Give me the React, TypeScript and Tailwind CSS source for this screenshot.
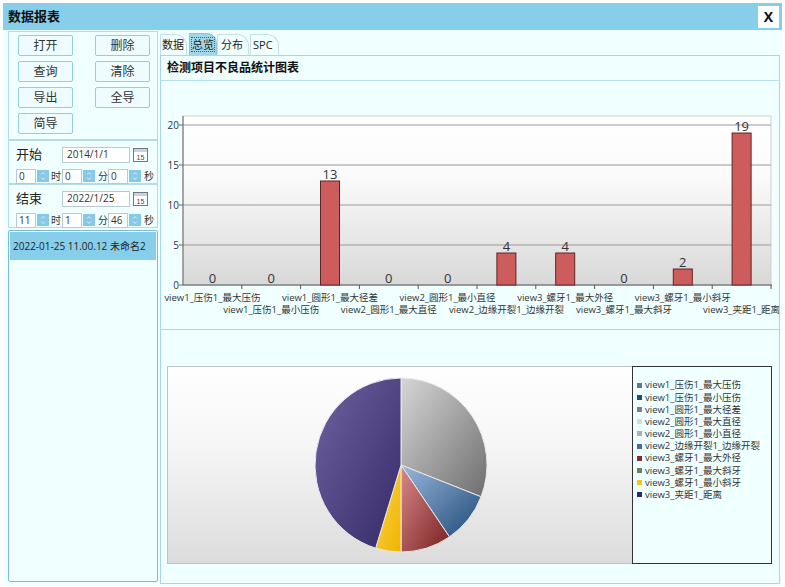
import React from "react"

type Cat = { name: string; value: number; color: string }

const cats: Cat[] = [
  { name: "view1_压伤1_最大压伤", value: 0, color: "#5f7888" },
  { name: "view1_压伤1_最小压伤", value: 0, color: "#1f4e79" },
  { name: "view1_圆形1_最大径差", value: 13, color: "#7f7f7f" },
  { name: "view2_圆形1_最大直径", value: 0, color: "#d8d8d8" },
  { name: "view2_圆形1_最小直径", value: 0, color: "#b0b0b0" },
  { name: "view2_边缘开裂1_边缘开裂", value: 4, color: "#4a6a9a" },
  { name: "view3_螺牙1_最大外径", value: 4, color: "#8b2a2a" },
  { name: "view3_螺牙1_最大斜牙", value: 0, color: "#6f7f5f" },
  { name: "view3_螺牙1_最小斜牙", value: 2, color: "#f5c518" },
  { name: "view3_夹距1_距离", value: 19, color: "#2c2870" },
]

// gradient stops per slice (light -> dark)
const sliceFill: Record<number, [string, string]> = {
  2: ["#d6d6d6", "#6e6e6e"],
  5: ["#9ab8dc", "#1f4a78"],
  6: ["#d88a8a", "#7a1f1f"],
  8: ["#fbd34a", "#f0b400"],
  9: ["#6f62a0", "#352a68"],
}

function Spinner() {
  return (
    <svg width="12" height="12" viewBox="0 0 12 12" className="shrink-0">
      <rect width="12" height="12" fill="#86c8e6" />
      <path d="M4 4.5 L6 2.5 L8 4.5" fill="none" stroke="#d9f1fb" strokeWidth="1" />
      <path d="M4 7.5 L6 9.5 L8 7.5" fill="none" stroke="#d9f1fb" strokeWidth="1" />
    </svg>
  )
}

function CalendarIcon() {
  return (
    <svg width="15" height="14" viewBox="0 0 15 14" className="shrink-0">
      <rect x="0.5" y="0.5" width="14" height="13" fill="#fff" stroke="#6d7a86" />
      <rect x="1" y="1" width="13" height="3" fill="#c9d3dc" />
      <text x="7.5" y="11.5" fontSize="7" textAnchor="middle" fill="#3a4a5a" fontFamily="Liberation Sans, sans-serif">
        15
      </text>
    </svg>
  )
}

function Btn({ label }: { label: string }) {
  return (
    <button className="flex h-[21px] w-[55px] items-center justify-center rounded-[2px] border border-[#93cde0] bg-[#effcff] text-[12px] text-[#333]">
      {label}
    </button>
  )
}

function TimeRow({ h, m, s }: { h: string; m: string; s: string }) {
  const box = "flex h-[15px] w-[20px] items-center border border-[#b9c9d3] bg-white pl-[2px] text-[10px]"
  return (
    <div className="flex items-center gap-[1px] text-[10px] text-[#333]">
      <div className={box}>{h}</div>
      <Spinner />
      <span className="ml-[1px] w-[10px]">时</span>
      <div className={box}>{m}</div>
      <Spinner />
      <span className="ml-[2px] w-[9px]">分</span>
      <div className={box}>{s}</div>
      <Spinner />
      <span className="ml-[2px]">秒</span>
    </div>
  )
}

function DateGroup({ label, date, h, m, s }: { label: string; date: string; h: string; m: string; s: string }) {
  return (
    <div className="flex h-[44px] flex-col gap-[4px] border border-[#b3dbe8] pl-[7px] pt-[4px]">
      <div className="flex items-center">
        <span className="w-[46px] text-[13px] text-[#222]">{label}</span>
        <div className="flex h-[16px] w-[68px] items-center border border-[#b9c9d3] bg-white pl-[4px] text-[10px] text-[#333]">
          {date}
        </div>
        <div className="ml-[3px]">
          <CalendarIcon />
        </div>
      </div>
      <TimeRow h={h} m={m} s={s} />
    </div>
  )
}

function BarChart() {
  const W = 58.8
  const x0 = 22
  const y0 = 204
  const u = 8
  return (
    <svg width={620} height={250} className="block" fontFamily="'Open Sans','Noto Sans CJK SC',sans-serif">
      <defs>
        <linearGradient id="plotbg" x1="0" y1="0" x2="0" y2="1">
          <stop offset="0" stopColor="#ffffff" />
          <stop offset="0.35" stopColor="#fbfbfb" />
          <stop offset="1" stopColor="#d8d8d8" />
        </linearGradient>
      </defs>
      <rect x={x0} y={35} width={588} height={169} fill="url(#plotbg)" stroke="#cfcfcf" />
      {[5, 10, 15, 20].map((v) => (
        <line key={v} x1={x0} x2={610} y1={y0 - v * u} y2={y0 - v * u} stroke="#9a9a9a" strokeWidth="1" />
      ))}
      <line x1={x0} x2={x0} y1={35} y2={y0} stroke="#666" />
      <line x1={x0} x2={611} y1={y0} y2={y0} stroke="#555" />
      {[0, 5, 10, 15, 20].map((v) => (
        <g key={v}>
          <line x1={x0 - 4} x2={x0} y1={y0 - v * u} y2={y0 - v * u} stroke="#666" />
          <text x={x0 - 4} y={y0 - v * u + 3.5} fontSize="10" textAnchor="end" fill="#333">
            {v}
          </text>
        </g>
      ))}
      {cats.map((c, i) => (
        <line key={i} x1={x0 + (i + 1) * W} x2={x0 + (i + 1) * W} y1={y0} y2={y0 + 4} stroke="#555" />
      ))}
      {cats.map((c, i) => {
        const cx = x0 + (i + 0.5) * W
        const top = y0 - c.value * u
        return (
          <g key={c.name}>
            {c.value > 0 && (
              <rect x={cx - 9.5} y={top} width={19} height={c.value * u} fill="#cd5c5c" stroke="#5e2424" strokeWidth="1" />
            )}
            <text x={cx} y={top - 2} fontSize="13" textAnchor="middle" fill="#333">
              {c.value}
            </text>
            <text x={cx} y={i % 2 === 0 ? 220 : 232} fontSize="9.5" textAnchor="middle" fill="#333">
              {c.name}
            </text>
          </g>
        )
      })}
    </svg>
  )
}

function PieChart() {
  const total = cats.reduce((a, c) => a + c.value, 0)
  const cx = 233
  const cy = 98
  const rx = 86
  const ry = 87
  let acc = 0
  const pt = (a: number) => [cx + rx * Math.sin(a), cy - ry * Math.cos(a)]
  return (
    <svg width={465} height={196} className="block">
      <defs>
        {Object.entries(sliceFill).map(([k, [a, b]]) => (
          <linearGradient key={k} id={"pie" + k} x1="0" y1="0" x2="1" y2="1">
            <stop offset="0" stopColor={a} />
            <stop offset="1" stopColor={b} />
          </linearGradient>
        ))}
      </defs>
      {cats.map((c, i) => {
        if (c.value === 0) return null
        const a0 = (acc / total) * Math.PI * 2
        acc += c.value
        const a1 = (acc / total) * Math.PI * 2
        const [sx, sy] = pt(a0)
        const [ex, ey] = pt(a1)
        const large = a1 - a0 > Math.PI ? 1 : 0
        const d = `M${cx},${cy} L${sx},${sy} A${rx},${ry} 0 ${large} 1 ${ex},${ey} Z`
        return <path key={i} d={d} fill={`url(#pie${i})`} stroke="#e9e9e9" strokeWidth="1" />
      })}
    </svg>
  )
}

export default function App() {
  return (
    <div className="h-[587px] w-[785px] overflow-hidden bg-white pl-[3px] pt-[3px] font-['Open_Sans','Noto_Sans_CJK_SC',sans-serif] text-[#222]">
      <div className="flex h-[582px] w-[779px] flex-col bg-[#f0ffff]">
        <div className="flex h-[27px] shrink-0 items-center justify-between bg-[#87ceeb] pl-[5px] pr-[3px]">
          <span className="text-[13px] font-bold text-[#111]">数据报表</span>
          <button className="flex h-[22px] w-[21px] items-center justify-center bg-white text-[14px] font-bold text-[#111]">
            X
          </button>
        </div>
        <div className="flex flex-1 gap-[2px] pl-[5px]">
          {/* left column */}
          <div className="flex w-[150px] flex-col pt-[1px]">
            <div className="grid h-[109px] grid-cols-[55px_55px] content-start gap-x-[22px] gap-y-[5px] border border-[#b3dbe8] pl-[9px] pt-[3px]">
              <Btn label="打开" />
              <Btn label="删除" />
              <Btn label="查询" />
              <Btn label="清除" />
              <Btn label="导出" />
              <Btn label="全导" />
              <Btn label="简导" />
            </div>
            <DateGroup label="开始" date="2014/1/1" h="0" m="0" s="0" />
            <DateGroup label="结束" date="2022/1/25" h="11" m="1" s="46" />
            <div className="mt-[2px] h-[352px] rounded-[2px] border border-[#7fbcd3] p-[1px]">
              <div className="flex h-[28px] items-center bg-[#87ceeb] pl-[3px] text-[10px] text-[#222]">
                2022-01-25 11.00.12 未命名2
              </div>
            </div>
          </div>
          {/* right panel */}
          <div className="flex w-[620px] flex-col pt-[3px]">
            <div className="flex h-[22px] items-end text-[11px] text-[#222]">
              <div className="flex h-[21px] w-[27px] items-center rounded-tr-[12px] border border-b-0 border-[#c5dfe8] pl-[1px]">
                数据
              </div>
              <div className="ml-[2px] flex h-[22px] w-[28px] items-center rounded-tr-[10px] border border-b-0 border-[#8fc4d8] bg-[#9fd6ea] pl-[1px]">
                <span className="border border-dotted border-[#557] leading-[13px]">总览</span>
              </div>
              <div className="flex h-[21px] w-[32px] items-center rounded-tr-[12px] border border-b-0 border-[#c5dfe8] pl-[3px]">
                分布
              </div>
              <div className="ml-[1px] flex h-[21px] w-[29px] items-center rounded-tr-[12px] border border-b-0 border-[#c5dfe8] pl-[2px]">
                SPC
              </div>
            </div>
            <div className="flex h-[529px] flex-col border border-[#a8d6e6]">
              <div className="flex h-[25px] shrink-0 items-center border-b border-[#b8e0ec] pl-[6px] text-[12px] font-bold text-[#111]">
                检测项目不良品统计图表
              </div>
              <div className="h-[249px] shrink-0 overflow-hidden border-b border-[#a8d6e6]">
                <BarChart />
              </div>
              <div className="flex pl-[6px] pt-[36px]">
                <div className="h-[198px] w-[466px] border border-[#b9c3c8] bg-[linear-gradient(to_bottom,#ffffff_0%,#f6f6f6_40%,#dcdcdc_100%)]">
                  <PieChart />
                </div>
                <div className="ml-[-1px] h-[198px] w-[140px] border border-[#333] bg-[#f0ffff] pl-[4px] pt-[12px]">
                  {cats.map((c) => (
                    <div key={c.name} className="flex h-[12.2px] items-center gap-[3px] text-[9.5px] leading-none text-[#333]">
                      <span className="h-[5px] w-[5px] shrink-0" style={{ backgroundColor: c.color }} />
                      {c.name}
                    </div>
                  ))}
                </div>
              </div>
            </div>
          </div>
        </div>
      </div>
    </div>
  )
}
